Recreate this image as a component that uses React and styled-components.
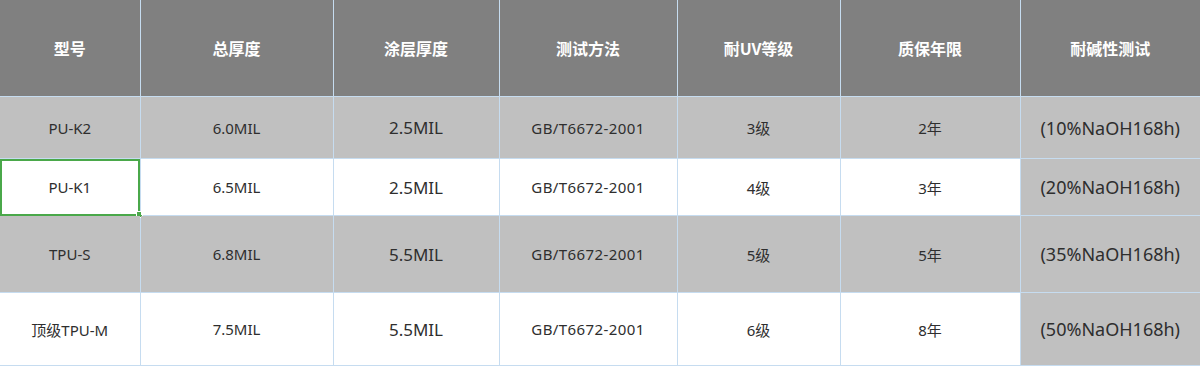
import React from "react";
import styled, { createGlobalStyle } from "styled-components";

const GlobalStyle = createGlobalStyle`
  html, body {
    margin: 0;
    padding: 0;
    background: #ffffff;
  }
  body {
    font-family: "Noto Sans", "Noto Sans CJK SC", sans-serif;
  }
`;

const Table = styled.table`
  width: 1200px;
  border-collapse: collapse;
  table-layout: fixed;
  color: #2e2e2e;
`;

const HeadCell = styled.th`
  height: 96px;
  padding: 0;
  background: #808080;
  color: #ffffff;
  font-family: "Noto Sans CJK SC", sans-serif;
  font-size: 16px;
  font-weight: 700;
  text-align: center;
  vertical-align: middle;
  border-right: 1px solid #c6dcf0;
  border-bottom: 1px solid #c6dcf0;

  &:last-child {
    border-right: none;
  }
`;

const Row = styled.tr`
  height: ${(p) => p.$h}px;
  background: ${(p) => (p.$grey ? "#c0c0c0" : "#ffffff")};
`;

const Cell = styled.td`
  position: relative;
  padding: 0;
  text-align: center;
  vertical-align: middle;
  font-size: ${(p) => p.$size || 15}px;
  letter-spacing: ${(p) => p.$spacing || 0}px;
  background: ${(p) => (p.$grey ? "#c0c0c0" : "inherit")};
  border-right: 1px solid #c6dcf0;
  border-bottom: 1px solid #c6dcf0;
  outline: ${(p) => (p.$selected ? "2px solid #4aa84a" : "none")};
  outline-offset: -2px;

  &:last-child {
    border-right: none;
  }
`;

const Handle = styled.span`
  position: absolute;
  right: -3px;
  bottom: -3px;
  width: 5px;
  height: 5px;
  background: #4aa84a;
  border: 1px solid #ffffff;
`;

const cols = [140, 193, 166, 178, 163, 180, 180];

// per-column text size / tracking
const colText = [
  { size: 15 },
  { size: 15 },
  { size: 17 },
  { size: 15, spacing: 0.4 },
  { size: 15 },
  { size: 15 },
  { size: 18 },
];

const headers = ["型号", "总厚度", "涂层厚度", "测试方法", "耐UV等级", "质保年限", "耐碱性测试"];

const rows = [
  { h: 62, grey: true, cells: ["PU-K2", "6.0MIL", "2.5MIL", "GB/T6672-2001", "3级", "2年", "(10%NaOH168h)"] },
  { h: 57, grey: false, selected: true, cells: ["PU-K1", "6.5MIL", "2.5MIL", "GB/T6672-2001", "4级", "3年", "(20%NaOH168h)"] },
  { h: 77, grey: true, cells: ["TPU-S", "6.8MIL", "5.5MIL", "GB/T6672-2001", "5级", "5年", "(35%NaOH168h)"] },
  { h: 73, grey: false, cells: ["顶级TPU-M", "7.5MIL", "5.5MIL", "GB/T6672-2001", "6级", "8年", "(50%NaOH168h)"] },
];

export default function App() {
  return (
    <>
      <GlobalStyle />
      <Table>
        <colgroup>
          {cols.map((w, i) => (
            <col key={i} style={{ width: w }} />
          ))}
        </colgroup>
        <thead>
          <tr>
            {headers.map((h) => (
              <HeadCell key={h}>{h}</HeadCell>
            ))}
          </tr>
        </thead>
        <tbody>
          {rows.map((r, ri) => (
            <Row key={ri} $h={r.h} $grey={r.grey}>
              {r.cells.map((c, ci) => (
                <Cell
                  key={ci}
                  $size={colText[ci].size}
                  $spacing={colText[ci].spacing}
                  $grey={ci === 6}
                  $selected={r.selected && ci === 0}
                >
                  {c}
                  {r.selected && ci === 0 && <Handle />}
                </Cell>
              ))}
            </Row>
          ))}
        </tbody>
      </Table>
    </>
  );
}
